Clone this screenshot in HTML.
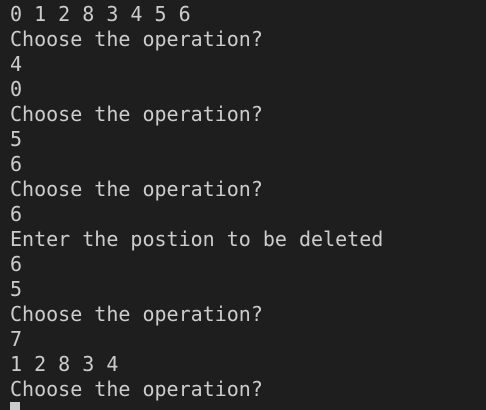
<!DOCTYPE html>
<html><head><style>
html,body{margin:0;padding:0;background:#1e1e1e;width:486px;height:410px;overflow:hidden}
pre{margin:0;position:absolute;left:10px;top:2px;font-family:"DejaVu Sans Mono","Liberation Mono",monospace;font-size:20px;line-height:25px;color:#cccccc}
.cur{position:absolute;left:10px;top:402px;width:10px;height:8px;background:#cccccc}
</style></head><body>
<pre>0 1 2 8 3 4 5 6
Choose the operation?
4
0
Choose the operation?
5
6
Choose the operation?
6
Enter the postion to be deleted
6
5
Choose the operation?
7
1 2 8 3 4
Choose the operation?</pre>
<div class="cur"></div>
</body></html>
